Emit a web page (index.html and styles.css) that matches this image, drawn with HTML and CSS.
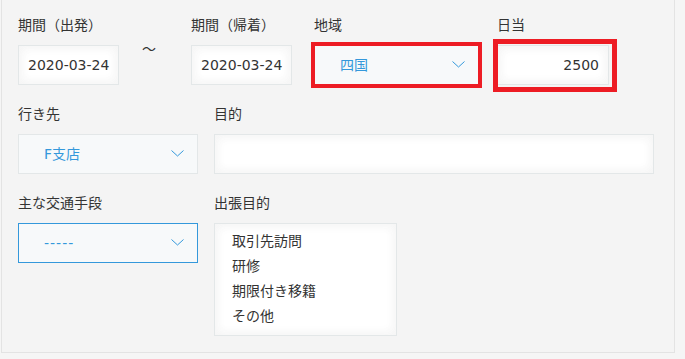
FILE: index.html
```html
<!DOCTYPE html>
<html lang="ja">
<head>
<meta charset="utf-8">
<link rel="stylesheet" href="styles.css">
</head>
<body>
<div class="panel">
  <div class="row row-1">
    <div class="field w-date">
      <div class="label">期間（出発）</div>
      <div class="input">2020-03-24</div>
    </div>
    <div class="tilde">～</div>
    <div class="field w-date">
      <div class="label">期間（帰着）</div>
      <div class="input">2020-03-24</div>
    </div>
    <div class="field w-area">
      <div class="label">地域</div>
      <div class="select marked">
        <span class="select-text">四国</span>
        <svg class="chev" width="13" height="7" viewBox="0 0 13 7"><polyline points="0.5,0.5 6.5,6 12.5,0.5" fill="none" stroke="#3498db" stroke-width="1"/></svg>
      </div>
    </div>
    <div class="field w-daily">
      <div class="label">日当</div>
      <div class="input-wrap">
        <div class="input num">2500</div>
      </div>
    </div>
  </div>

  <div class="row row-2">
    <div class="field w-sel">
      <div class="label">行き先</div>
      <div class="select">
        <span class="select-text">F支店</span>
        <svg class="chev" width="13" height="7" viewBox="0 0 13 7"><polyline points="0.5,0.5 6.5,6 12.5,0.5" fill="none" stroke="#3498db" stroke-width="1"/></svg>
      </div>
    </div>
    <div class="field w-purpose">
      <div class="label">目的</div>
      <div class="input"></div>
    </div>
  </div>

  <div class="row row-3">
    <div class="field w-sel">
      <div class="label">主な交通手段</div>
      <div class="select focused">
        <span class="select-text dashes">-----</span>
        <svg class="chev" width="13" height="7" viewBox="0 0 13 7"><polyline points="0.5,0.5 6.5,6 12.5,0.5" fill="none" stroke="#3498db" stroke-width="1"/></svg>
      </div>
    </div>
    <div class="field w-list">
      <div class="label">出張目的</div>
      <div class="listbox">
        <div class="item">取引先訪問</div>
        <div class="item">研修</div>
        <div class="item">期限付き移籍</div>
        <div class="item">その他</div>
      </div>
    </div>
  </div>
</div>
</body>
</html>
```

FILE: styles.css
```css
*, *::before, *::after { box-sizing: border-box; }

html, body {
  margin: 0;
  padding: 0;
  background: #f5f5f5;
}

body {
  font-family: "DejaVu Sans", "Noto Sans CJK JP", sans-serif;
  font-size: 14px;
  color: #333;
  width: 685px;
  height: 359px;
  overflow: hidden;
}

.panel {
  margin-left: 1px;
  width: 674px;
  background: #f4f4f4;
  border: 1px solid #e3e3e3;
  border-top: none;
  padding: 15px 0 16px 16px;
}

.row {
  display: flex;
  align-items: flex-start;
}

.row-1 { margin-bottom: 19px; }
.row-2 { margin-bottom: 19px; }
.row-2 .field + .field,
.row-3 .field + .field { margin-left: 16px; }

.field {
  display: flex;
  flex-direction: column;
}

.label {
  height: 20px;
  line-height: 20px;
  font-size: 14px;
  color: #333;
  margin-bottom: 10px;
  white-space: nowrap;
}

.w-date { width: 101px; }
.w-area { width: 165px; margin-left: 22px; }
.w-daily { width: 112px; margin-left: 18px; }
.w-sel { width: 180px; }
.w-purpose { width: 440px; }
.w-list { width: 183px; }

.tilde {
  width: 72px;
  padding-left: 23px;
  padding-top: 23px;
  font-family: "Noto Sans CJK JP", sans-serif;
  font-size: 14px;
  line-height: 20px;
  color: #333;
}

.input {
  height: 40px;
  background: #fff;
  border: 1px solid #e3e7e8;
  box-shadow: inset 1px 1px 12px #f5f5f5, inset -1px -1px 12px #f5f5f5;
  padding: 0 9px;
  line-height: 38px;
  font-size: 14px;
  color: #333;
  white-space: nowrap;
}

.input.num { text-align: right; }

.input-wrap { position: relative; }
.input-wrap::after {
  content: "";
  position: absolute;
  left: -4px;
  top: -6px;
  width: 124px;
  height: 53px;
  border: 5px solid #ed1c24;
  pointer-events: none;
}

.select {
  position: relative;
  height: 40px;
  background: #f7f9fa;
  border: 1px solid #e3e7e8;
  display: flex;
  align-items: center;
  justify-content: space-between;
  padding: 0 13px 0 25px;
  color: #3498db;
  font-size: 14px;
}

.select.focused { border-color: #3498db; }

.select.marked {
  outline: 4px solid #ed1c24;
  outline-offset: -1px;
}

.select-text { line-height: 20px; }
.select-text.dashes { letter-spacing: 1px; }

.chev { display: block; margin-top: -1px; }

.listbox {
  height: 113px;
  background: #fff;
  border: 1px solid #e3e7e8;
  box-shadow: inset 1px 1px 12px #f5f5f5, inset -1px -1px 12px #f5f5f5;
  padding: 5px 0 0 17px;
}

.item {
  height: 25px;
  line-height: 25px;
  font-size: 14px;
  color: #333;
  white-space: nowrap;
}
```
